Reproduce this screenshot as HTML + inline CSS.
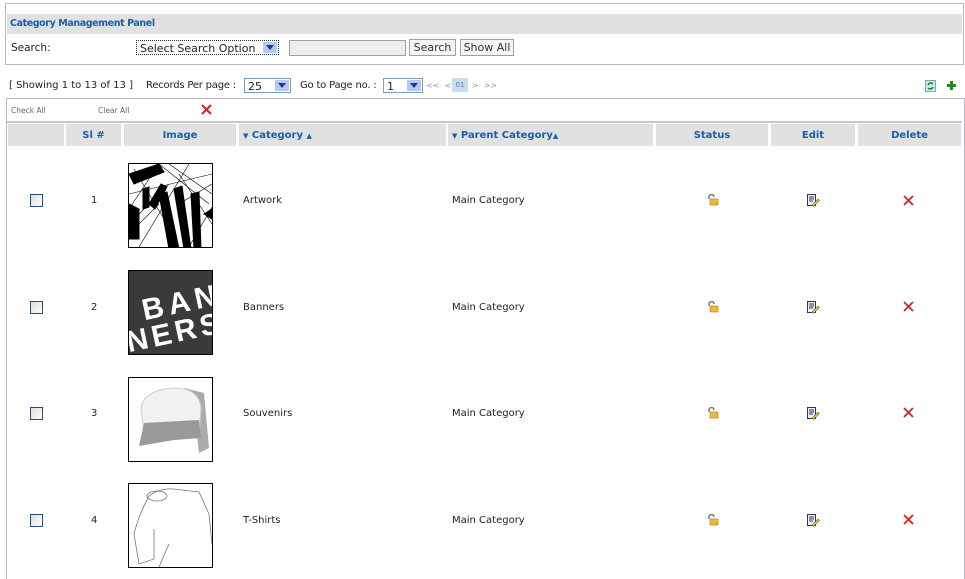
<!DOCTYPE html>
<html><head><meta charset="utf-8">
<style>
body{margin:0;width:965px;height:573px;background:#fff;font-family:Verdana,"DejaVu Sans","Liberation Sans",sans-serif;font-size:10px;color:#222;position:relative;overflow:hidden}
.a{position:absolute}
.panel{left:5px;top:3px;width:957px;height:60px;border:1px solid #b9b9c4;background:#fff}
.bar{left:7px;top:14px;width:955px;height:20px;background:#e1e1e1}
.title{left:10px;top:18px;font-weight:bold;color:#1a5ea8;font-size:9.5px;letter-spacing:-0.4px}
.sel{border:1px solid #7f9db9;background:#fff;height:15px;font-size:11px;line-height:15px;padding-left:3px;box-sizing:border-box}
.arr{position:absolute;right:1px;top:1px;width:14px;height:11px;background:#b7c8f3;border:0}
.arr:after{content:"";position:absolute;left:3px;top:3px;border:4px solid transparent;border-top:5px solid #1c3b8a;border-bottom:0}
.btn{border:1px solid #a0a0a0;background:#f4f4f4;height:17px;box-sizing:border-box;font-size:11px;line-height:15px;text-align:center;color:#333}
.tbl{left:6px;top:98px;width:957px;height:480px;border:1px solid #b9b9c4;border-bottom:0}
.hd{top:124px;height:22px;background:#e1e1e1;font-weight:bold;color:#1a5ea8;text-align:center;line-height:24px;font-size:10px}
.cb{width:11px;height:11px;border:1px solid #1c5180;background:linear-gradient(135deg,#dcdcdc,#fff)}
.img{left:128px;width:83px;height:83px;border:1px solid #000;overflow:hidden;background:#fff}
</style></head><body>
<div class="a panel"></div>
<div class="a bar"></div>
<div class="a title">Category Management Panel</div>
<div class="a" style="left:11px;top:42px;font-size:10.5px">Search:</div>
<div class="a sel" style="left:136px;top:40px;width:143px;border:1px dotted #333">Select Search Option<div class="arr"></div></div>
<div class="a" style="left:289px;top:40px;width:117px;height:16px;border:1px solid #a0a0a0;background:#eee;box-sizing:border-box"></div>
<div class="a btn" style="left:409px;top:39px;width:47px">Search</div>
<div class="a btn" style="left:460px;top:39px;width:54px">Show All</div>

<div class="a" style="left:9px;top:80px;font-size:10px;white-space:nowrap">[ Showing 1 to 13 of 13 ]</div>
<div class="a" style="left:146px;top:80px;font-size:10px;white-space:nowrap;letter-spacing:-0.2px">Records Per page :</div>
<div class="a sel" style="left:244px;top:78px;width:47px">25<div class="arr"></div></div>
<div class="a" style="left:300px;top:80px;font-size:10px;white-space:nowrap;letter-spacing:-0.2px">Go to Page no. :</div>
<div class="a sel" style="left:383px;top:78px;width:40px">1<div class="arr"></div></div>
<div class="a" style="left:426px;top:81px;font-size:8px;color:#999;white-space:nowrap">&lt;&lt;&nbsp; &lt;</div>
<div class="a" style="left:452px;top:78px;width:16px;height:14px;background:#c8dcf0;font-size:7px;color:#5a7ab0;text-align:center;line-height:15px">01</div>
<div class="a" style="left:472px;top:81px;font-size:8px;color:#999">&gt;&nbsp; &gt;&gt;</div>
<svg class="a" style="left:925px;top:80px" width="11" height="12"><rect x="0.5" y="0.5" width="10" height="11" fill="#cfe8f5" stroke="#7aa"/><path d="M3 5a3 3 0 0 1 5-1M8 7a3 3 0 0 1-5 1" stroke="#1a8a1a" stroke-width="1.6" fill="none"/></svg>
<svg class="a" style="left:946px;top:80px" width="11" height="11"><path d="M5.5 1v9M1 5.5h9" stroke="#1e8a1e" stroke-width="3"/></svg>

<div class="a tbl"></div>
<div class="a" style="left:7px;top:121px;width:955px;height:2px;background:#c8c8c8"></div>
<div class="a" style="left:11px;top:106px;font-size:7.5px;color:#666">Check All</div>
<div class="a" style="left:98px;top:106px;font-size:7.5px;color:#666">Clear All</div>
<svg class="a" style="left:201px;top:104px" width="11" height="11"><path d="M1 1l9 9M10 1l-9 9" stroke="#d62020" stroke-width="2"/></svg>

<div class="a hd" style="left:8px;width:56px"></div>
<div class="a hd" style="left:66px;width:55px">Sl #</div>
<div class="a hd" style="left:124px;width:112px">Image</div>
<div class="a hd" style="left:239px;width:207px;text-align:left;padding-left:4px;box-sizing:border-box"><span style="font-size:7px">▼</span> Category <span style="font-size:7px">▲</span></div>
<div class="a hd" style="left:448px;width:205px;text-align:left;padding-left:4px;box-sizing:border-box"><span style="font-size:7px">▼</span> Parent Category<span style="font-size:7px">▲</span></div>
<div class="a hd" style="left:656px;width:112px">Status</div>
<div class="a hd" style="left:771px;width:84px">Edit</div>
<div class="a hd" style="left:858px;width:103px">Delete</div>

<div class="a" style="left:0;top:194px;width:965px">
 <div class="a cb" style="left:30px;top:0"></div>
 <div class="a" style="left:91px;top:1px">1</div>
 <div class="a" style="left:243px;top:1px">Artwork</div>
 <div class="a" style="left:452px;top:1px">Main Category</div>
</div>
<div class="a" style="left:0;top:301px;width:965px">
 <div class="a cb" style="left:30px;top:0"></div>
 <div class="a" style="left:91px;top:1px">2</div>
 <div class="a" style="left:243px;top:1px">Banners</div>
 <div class="a" style="left:452px;top:1px">Main Category</div>
</div>
<div class="a" style="left:0;top:407px;width:965px">
 <div class="a cb" style="left:30px;top:0"></div>
 <div class="a" style="left:91px;top:1px">3</div>
 <div class="a" style="left:243px;top:1px">Souvenirs</div>
 <div class="a" style="left:452px;top:1px">Main Category</div>
</div>
<div class="a" style="left:0;top:514px;width:965px">
 <div class="a cb" style="left:30px;top:0"></div>
 <div class="a" style="left:91px;top:1px">4</div>
 <div class="a" style="left:243px;top:1px">T-Shirts</div>
 <div class="a" style="left:452px;top:1px">Main Category</div>
</div>

<div class="a img" style="top:163px"><svg width="83" height="83"><g stroke="#000" fill="#000">
<path d="M0 10L30 0 35 8 5 20Z"/><path d="M20 40l12-20 6 3-12 22z"/><path d="M40 85L30 30 38 28 50 85z"/><path d="M55 85L45 25 53 22 62 85z"/><path d="M65 85L62 30 70 28 72 85z"/><path d="M75 50L83 45 83 55z"/><path d="M0 40l10 5 0 30-10 0z"/><path d="M14 25l6-2 0 20-6 2z"/>
<path d="M0 30L83 10M10 83L60 0M0 60L40 20M50 10L83 60M30 0L80 40M0 45l30-45M5 5l30 50M40 0l43 30M60 83l23-40M0 70l30-30M50 40l33-20" stroke-width="0.6" fill="none"/></g></svg></div>
<div class="a img" style="top:270px;background:#3a3a3a"><svg width="83" height="83"><g transform="rotate(-12 40 40)" fill="#fff" font-family="Liberation Sans,sans-serif" font-weight="bold" font-size="30"><text x="14" y="44" textLength="75">BAN</text><text x="-8" y="72" textLength="95">NERS</text></g></svg></div>
<div class="a img" style="top:377px"><svg width="83" height="83"><path d="M55 10L75 15 80 70 70 75 65 30z" fill="#aaa"/><path d="M12 30Q15 12 45 10Q70 10 72 30L70 60 15 55z" fill="#f2f2f2" stroke="#ccc"/><path d="M15 45L70 42 72 60 45 62 10 68z" fill="#9a9a9a"/></svg></div>
<div class="a img" style="top:483px"><svg width="83" height="83" fill="none" stroke="#777" stroke-width="0.8"><path d="M20 12Q30 4 45 5L70 8 80 30M20 12Q10 30 5 50L10 80 25 75 25 45M80 30L83 60M40 60L30 83"/><ellipse cx="28" cy="12" rx="10" ry="5"/></svg></div>

<svg width="0" height="0" style="position:absolute"><defs>
<g id="lock"><path d="M2 5V3a2.5 2.5 0 0 1 5 0" stroke="#777" stroke-width="1.5" fill="none"/><rect x="3" y="5" width="8" height="6" fill="#f0b93a" stroke="#b07a10" stroke-width="0.6"/></g>
<g id="edit"><rect x="0.5" y="0.5" width="8" height="11" fill="#eef" stroke="#335"/><path d="M2 3h5M2 5h5M2 7h4" stroke="#335"/><path d="M5 11l6-6 1.5 1.5-6 6z" fill="#e8c020" stroke="#333" stroke-width="0.5"/></g>
<g id="del"><path d="M1 1l9 9M10 1l-9 9" stroke="#d62020" stroke-width="1.8"/></g>
</defs></svg>
<svg class="a" style="left:707px;top:194px" width="13" height="12"><use href="#lock"/></svg>
<svg class="a" style="left:807px;top:194px" width="14" height="14"><use href="#edit"/></svg>
<svg class="a" style="left:903px;top:195px" width="11" height="11"><use href="#del"/></svg>
<svg class="a" style="left:707px;top:301px" width="13" height="12"><use href="#lock"/></svg>
<svg class="a" style="left:807px;top:301px" width="14" height="14"><use href="#edit"/></svg>
<svg class="a" style="left:903px;top:301px" width="11" height="11"><use href="#del"/></svg>
<svg class="a" style="left:707px;top:407px" width="13" height="12"><use href="#lock"/></svg>
<svg class="a" style="left:807px;top:407px" width="14" height="14"><use href="#edit"/></svg>
<svg class="a" style="left:903px;top:407px" width="11" height="11"><use href="#del"/></svg>
<svg class="a" style="left:707px;top:514px" width="13" height="12"><use href="#lock"/></svg>
<svg class="a" style="left:807px;top:514px" width="14" height="14"><use href="#edit"/></svg>
<svg class="a" style="left:903px;top:514px" width="11" height="11"><use href="#del"/></svg>
</body></html>
